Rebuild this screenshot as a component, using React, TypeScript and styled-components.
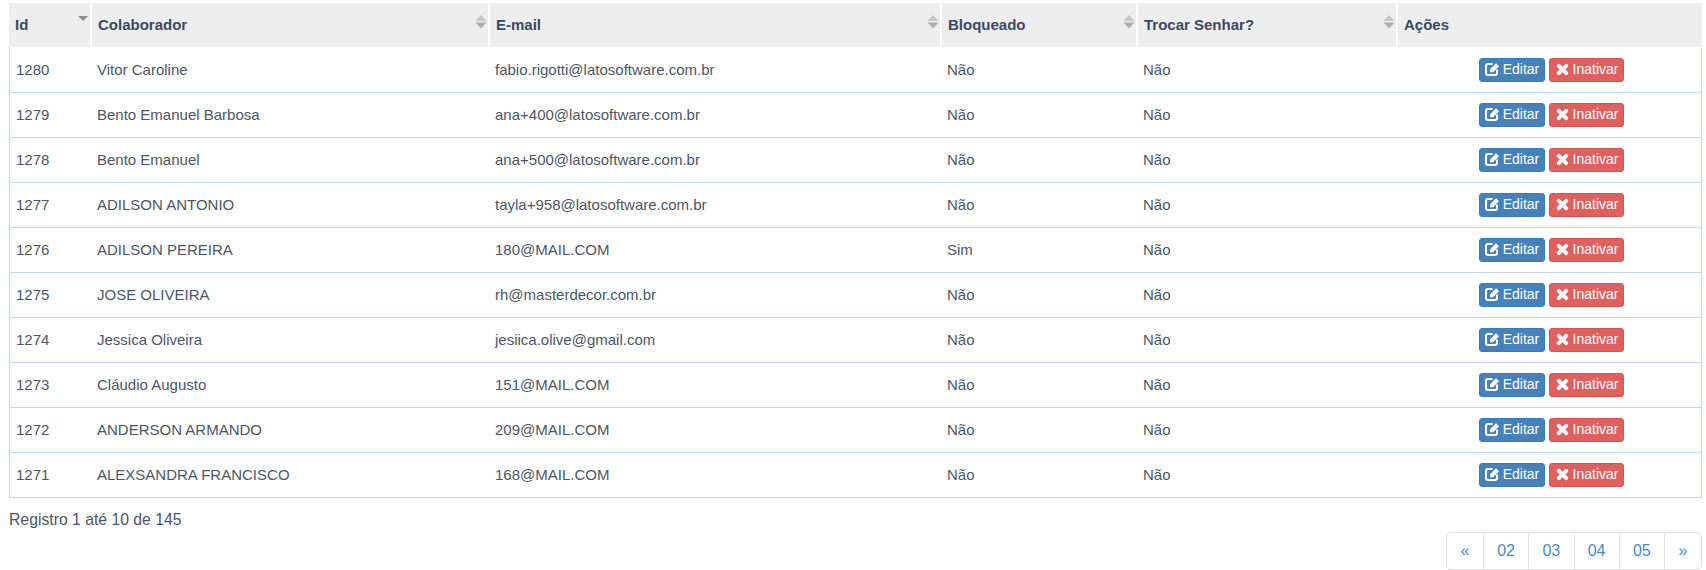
import React from "react";
import styled, { createGlobalStyle } from "styled-components";
import { FaTimes } from "react-icons/fa";

interface Collaborator {
  id: number;
  name: string;
  email: string;
  blocked: string;
  changePassword: string;
}

const collaborators: Collaborator[] = [
  { id: 1280, name: "Vitor Caroline", email: "fabio.rigotti@latosoftware.com.br", blocked: "Não", changePassword: "Não" },
  { id: 1279, name: "Bento Emanuel Barbosa", email: "ana+400@latosoftware.com.br", blocked: "Não", changePassword: "Não" },
  { id: 1278, name: "Bento Emanuel", email: "ana+500@latosoftware.com.br", blocked: "Não", changePassword: "Não" },
  { id: 1277, name: "ADILSON ANTONIO", email: "tayla+958@latosoftware.com.br", blocked: "Não", changePassword: "Não" },
  { id: 1276, name: "ADILSON PEREIRA", email: "180@MAIL.COM", blocked: "Sim", changePassword: "Não" },
  { id: 1275, name: "JOSE OLIVEIRA", email: "rh@masterdecor.com.br", blocked: "Não", changePassword: "Não" },
  { id: 1274, name: "Jessica Oliveira", email: "jesiica.olive@gmail.com", blocked: "Não", changePassword: "Não" },
  { id: 1273, name: "Cláudio Augusto", email: "151@MAIL.COM", blocked: "Não", changePassword: "Não" },
  { id: 1272, name: "ANDERSON ARMANDO", email: "209@MAIL.COM", blocked: "Não", changePassword: "Não" },
  { id: 1271, name: "ALEXSANDRA FRANCISCO", email: "168@MAIL.COM", blocked: "Não", changePassword: "Não" },
];

const columns = [
  { label: "Id", width: 83, sort: "desc" },
  { label: "Colaborador", width: 398, sort: "both" },
  { label: "E-mail", width: 452, sort: "both" },
  { label: "Bloqueado", width: 196, sort: "both" },
  { label: "Trocar Senhar?", width: 260, sort: "both" },
  { label: "Ações", width: 304, sort: "none" },
];

const pages = ["«", "02", "03", "04", "05", "»"];

const GlobalStyle = createGlobalStyle`
  html, body {
    margin: 0;
    background: #fff;
    overflow: hidden;
  }
  body {
    font-family: "Liberation Sans", Arial, sans-serif;
    font-size: 15px;
    color: #4c5666;
  }
`;

const Page = styled.div`
  padding: 3px 4px 0 9px;
  width: 1693px;
`;

const Table = styled.table`
  width: 1693px;
  table-layout: fixed;
  border-collapse: separate;
  border-spacing: 0;
`;

const HeadCell = styled.th`
  position: relative;
  height: 45px;
  padding: 0 0 2px 6px;
  box-sizing: border-box;
  background: #eee;
  background-clip: padding-box;
  border-right: 2px solid #fff;
  border-bottom: 1px solid #fff;
  text-align: left;
  font-size: 15px;
  font-weight: 700;
  color: #3b4a63;

  &:last-child {
    border-right: 0;
  }
`;

const SortMark = styled.svg`
  position: absolute;
  top: 12px;
  right: 1px;
`;

const Cell = styled.td`
  height: 45px;
  padding: 0 6px 2px 5px;
  box-sizing: border-box;
  border-bottom: 1px solid #c3d9f3;

  &:first-child {
    padding-left: 6px;
    border-left: 1px solid #c3d9f3;
  }

  &:last-child {
    border-right: 1px solid #c3d9f3;
  }
`;

const Actions = styled.div`
  display: flex;
  gap: 4px;
  padding: 2px 0 0 76px;
`;

const ActionButton = styled.button<{ $danger?: boolean }>`
  display: inline-flex;
  align-items: center;
  justify-content: center;
  gap: 3px;
  height: 24px;
  padding: 0 0 2px;
  width: ${(p) => (p.$danger ? "75px" : "66px")};
  border: 1px solid ${(p) => (p.$danger ? "#d9534f" : "#357ebd")};
  border-radius: 3px;
  background: ${(p) => (p.$danger ? "#e06060" : "#4682b9")};
  color: #fff;
  font-family: inherit;
  font-size: 14px;
  cursor: pointer;

  svg {
    flex: none;
  }
`;

const CloseIcon = styled(FaTimes)`
  stroke: currentColor;
  stroke-width: 40px;
`;

const Summary = styled.div`
  margin-top: 13px;
  line-height: 17px;
  font-size: 15.75px;
`;

const PagerRow = styled.div`
  display: flex;
  justify-content: flex-end;
  margin-top: 4px;
`;

const Pager = styled.ul`
  display: flex;
  margin: 0;
  padding: 0;
  list-style: none;
  height: 38px;
  border: 1px solid #e2e2e2;
  border-radius: 5px;
  box-sizing: border-box;
`;

const PageLink = styled.li`
  display: flex;
  align-items: center;
  justify-content: center;
  width: 45.25px;
  box-sizing: border-box;
  border-right: 1px solid #e2e2e2;
  color: #4a8ac5;
  font-size: 16px;

  &:first-child {
    width: 37px;
  }

  &:last-child {
    width: 36px;
    border-right: 0;
  }
`;

const SortIcon = ({ sort }: { sort: string }) => {
  if (sort === "none") return null;
  return (
    <SortMark width="12" height="16" viewBox="0 0 12 16">
      {sort === "both" && <path d="M6 0 L11.5 6 H0.5 Z" fill="#c8c8c8" />}
      {sort === "both" && <path d="M0.5 7.5 H11.5 L6 13.5 Z" fill="#adadad" />}
      {sort === "desc" && <path d="M1 1 H11 L6 6 Z" fill="#8f8f8f" />}
    </SortMark>
  );
};

const EditIcon = () => (
  <svg width="15" height="14" viewBox="0 0 15 14" fill="none">
    <path
      d="M7.5 2 H3 A2 2 0 0 0 1 4 V11 A2 2 0 0 0 3 13 H10 A2 2 0 0 0 12 11 V7.5"
      stroke="currentColor"
      strokeWidth="2"
    />
    <path d="M5 7.4 L11 1.2 L14 4.2 L8 10.2 H5 Z" fill="currentColor" />
  </svg>
);

const App = () => {
  return (
    <Page>
      <GlobalStyle />
      <Table>
        <colgroup>
          {columns.map((column) => (
            <col key={column.label} width={column.width} />
          ))}
        </colgroup>
        <thead>
          <tr>
            {columns.map((column) => (
              <HeadCell key={column.label}>
                {column.label}
                <SortIcon sort={column.sort} />
              </HeadCell>
            ))}
          </tr>
        </thead>
        <tbody>
          {collaborators.map((item) => (
            <tr key={item.id}>
              <Cell>{item.id}</Cell>
              <Cell>{item.name}</Cell>
              <Cell>{item.email}</Cell>
              <Cell>{item.blocked}</Cell>
              <Cell>{item.changePassword}</Cell>
              <Cell>
                <Actions>
                  <ActionButton>
                    <EditIcon /> Editar
                  </ActionButton>
                  <ActionButton $danger>
                    <CloseIcon size={15} /> Inativar
                  </ActionButton>
                </Actions>
              </Cell>
            </tr>
          ))}
        </tbody>
      </Table>
      <Summary>Registro 1 até 10 de 145</Summary>
      <PagerRow>
        <Pager>
          {pages.map((page) => (
            <PageLink key={page}>{page}</PageLink>
          ))}
        </Pager>
      </PagerRow>
    </Page>
  );
};

export default App;
